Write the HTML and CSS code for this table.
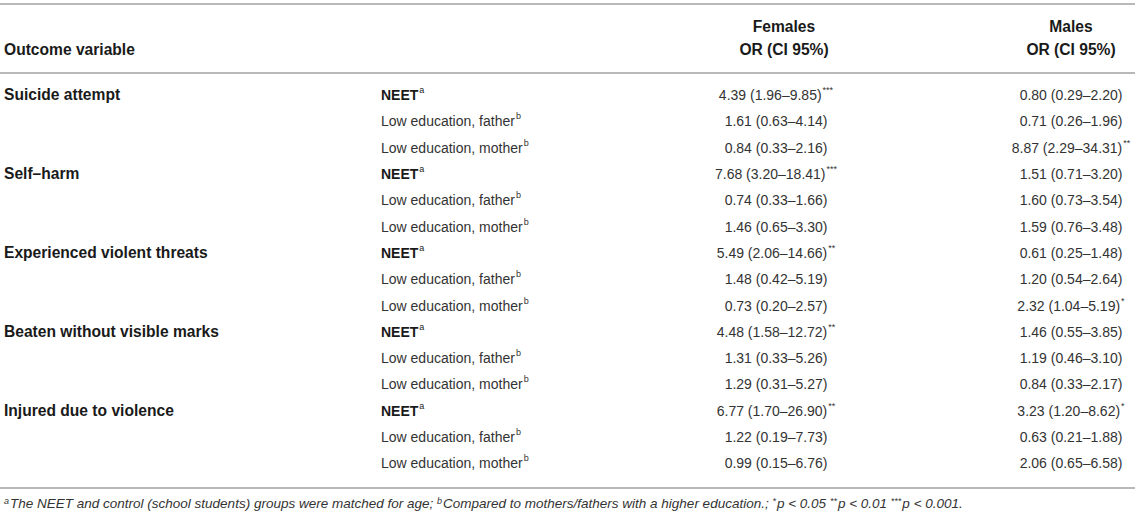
FILE: index.html
```html
<!DOCTYPE html>
<html lang="en">
<head>
<meta charset="utf-8">
<title>Table</title>
<link rel="stylesheet" href="styles.css">
</head>
<body>
<div class="table">
  <div class="thead">
    <div class="hcell c1"></div>
    <div class="hcell c2"></div>
    <div class="hcell c3">Females</div>
    <div class="hcell c4">Males</div>
    <div class="hcell c1">Outcome variable</div>
    <div class="hcell c2"></div>
    <div class="hcell c3">OR (CI 95%)</div>
    <div class="hcell c4">OR (CI 95%)</div>
  </div>
  <div class="tbody">
    <div class="cell c1 lab">Suicide attempt</div>
    <div class="cell c2 b">NEET<sup>a</sup></div>
    <div class="cell c3">4.39 (1.96–9.85)<sup>***</sup></div>
    <div class="cell c4">0.80 (0.29–2.20)</div>
    <div class="cell c1"></div>
    <div class="cell c2">Low education, father<sup>b</sup></div>
    <div class="cell c3">1.61 (0.63–4.14)</div>
    <div class="cell c4">0.71 (0.26–1.96)</div>
    <div class="cell c1"></div>
    <div class="cell c2">Low education, mother<sup>b</sup></div>
    <div class="cell c3">0.84 (0.33–2.16)</div>
    <div class="cell c4">8.87 (2.29–34.31)<sup>**</sup></div>

    <div class="cell c1 lab">Self–harm</div>
    <div class="cell c2 b">NEET<sup>a</sup></div>
    <div class="cell c3">7.68 (3.20–18.41)<sup>***</sup></div>
    <div class="cell c4">1.51 (0.71–3.20)</div>
    <div class="cell c1"></div>
    <div class="cell c2">Low education, father<sup>b</sup></div>
    <div class="cell c3">0.74 (0.33–1.66)</div>
    <div class="cell c4">1.60 (0.73–3.54)</div>
    <div class="cell c1"></div>
    <div class="cell c2">Low education, mother<sup>b</sup></div>
    <div class="cell c3">1.46 (0.65–3.30)</div>
    <div class="cell c4">1.59 (0.76–3.48)</div>

    <div class="cell c1 lab">Experienced violent threats</div>
    <div class="cell c2 b">NEET<sup>a</sup></div>
    <div class="cell c3">5.49 (2.06–14.66)<sup>**</sup></div>
    <div class="cell c4">0.61 (0.25–1.48)</div>
    <div class="cell c1"></div>
    <div class="cell c2">Low education, father<sup>b</sup></div>
    <div class="cell c3">1.48 (0.42–5.19)</div>
    <div class="cell c4">1.20 (0.54–2.64)</div>
    <div class="cell c1"></div>
    <div class="cell c2">Low education, mother<sup>b</sup></div>
    <div class="cell c3">0.73 (0.20–2.57)</div>
    <div class="cell c4">2.32 (1.04–5.19)<sup>*</sup></div>

    <div class="cell c1 lab">Beaten without visible marks</div>
    <div class="cell c2 b">NEET<sup>a</sup></div>
    <div class="cell c3">4.48 (1.58–12.72)<sup>**</sup></div>
    <div class="cell c4">1.46 (0.55–3.85)</div>
    <div class="cell c1"></div>
    <div class="cell c2">Low education, father<sup>b</sup></div>
    <div class="cell c3">1.31 (0.33–5.26)</div>
    <div class="cell c4">1.19 (0.46–3.10)</div>
    <div class="cell c1"></div>
    <div class="cell c2">Low education, mother<sup>b</sup></div>
    <div class="cell c3">1.29 (0.31–5.27)</div>
    <div class="cell c4">0.84 (0.33–2.17)</div>

    <div class="cell c1 lab">Injured due to violence</div>
    <div class="cell c2 b">NEET<sup>a</sup></div>
    <div class="cell c3">6.77 (1.70–26.90)<sup>**</sup></div>
    <div class="cell c4">3.23 (1.20–8.62)<sup>*</sup></div>
    <div class="cell c1"></div>
    <div class="cell c2">Low education, father <sup>b</sup></div>
    <div class="cell c3">1.22 (0.19–7.73)</div>
    <div class="cell c4">0.63 (0.21–1.88)</div>
    <div class="cell c1"></div>
    <div class="cell c2">Low education, mother <sup>b</sup></div>
    <div class="cell c3">0.99 (0.15–6.76)</div>
    <div class="cell c4">2.06 (0.65–6.58)</div>
  </div>
</div>
<p class="foot"><sup>a</sup>The NEET and control (school students) groups were matched for age; <sup>b</sup>Compared to mothers/fathers with a higher education.; <sup>*</sup><i>p</i> &lt; 0.05 <sup>**</sup><i>p</i> &lt; 0.01 <sup>***</sup><i>p</i> &lt; 0.001.</p>
</body>
</html>
```

FILE: styles.css
```css
html, body {
  margin: 0;
  padding: 0;
  background: #ffffff;
}
body {
  font-family: "Liberation Sans", Arial, Helvetica, sans-serif;
  font-size: 14px;
  color: #333333;
}
.table {
  width: 1135px;
  margin-top: 3px;
  border-top: 2px solid #b8b8b8;
  border-bottom: 2px solid #b8b8b8;
}
.thead {
  display: grid;
  grid-template-columns: 373px 186px 442px 134px;
  grid-auto-rows: 23px;
  padding: 10px 0 11px;
  border-bottom: 2px solid #b8b8b8;
}
.tbody {
  display: grid;
  grid-template-columns: 373px 186px 442px 134px;
  grid-auto-rows: 26.3px;
  padding: 8px 0 11px;
}
.hcell, .cell {
  display: flex;
  align-items: center;
  white-space: nowrap;
}
.hcell {
  font-weight: bold;
  font-size: 15.6px;
  color: #1a1a1a;
}
.c1 { padding-left: 4px; }
.c2 { padding-left: 8px; }
.c3, .c4 { justify-content: center; }
.c4 { padding-left: 6px; }
.hcell.c3 { padding-left: 8px; }
.cell.c3 { padding-right: 8px; }
.lab, .b {
  font-weight: bold;
  color: #1a1a1a;
}
.lab { font-size: 15.6px; }
sup {
  font-size: 9px;
  font-weight: normal;
  line-height: 0;
  position: relative;
  top: -5px;
  vertical-align: baseline;
  margin-left: 1px;
}
.foot {
  margin: 7px 0 0 4px;
  font-size: 13.5px;
  font-style: italic;
  color: #333333;
  white-space: nowrap;
}
.foot sup {
  top: -4px;
  margin-left: 0;
  margin-right: 1px;
}
```
